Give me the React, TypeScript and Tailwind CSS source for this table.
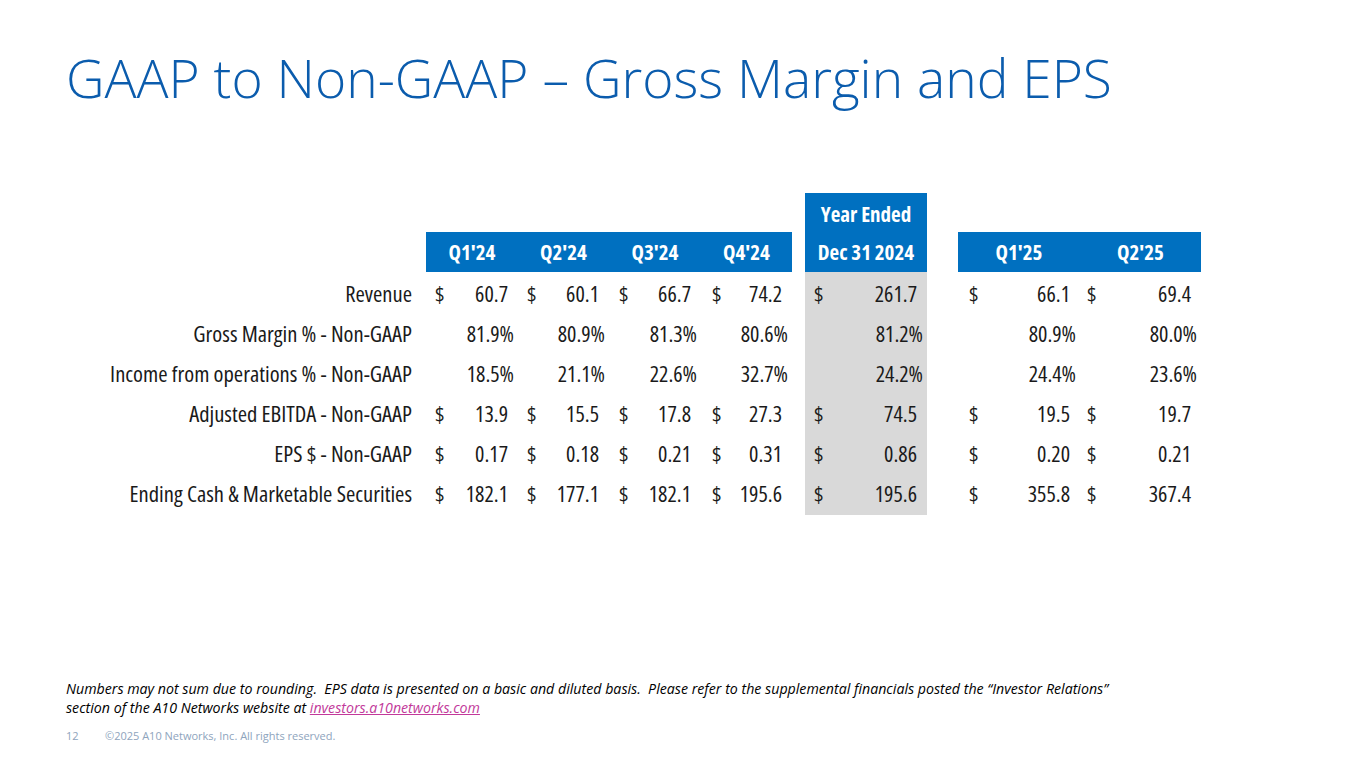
const tableFont = { fontFamily: '"Open Sans", sans-serif' }

type Row = { label: string; dollar: boolean; values: string[] }

const rows: Row[] = [
  { label: "Revenue", dollar: true, values: ["60.7", "60.1", "66.7", "74.2", "261.7", "66.1", "69.4"] },
  { label: "Gross Margin % - Non-GAAP", dollar: false, values: ["81.9%", "80.9%", "81.3%", "80.6%", "81.2%", "80.9%", "80.0%"] },
  { label: "Income from operations % - Non-GAAP", dollar: false, values: ["18.5%", "21.1%", "22.6%", "32.7%", "24.2%", "24.4%", "23.6%"] },
  { label: "Adjusted EBITDA - Non-GAAP", dollar: true, values: ["13.9", "15.5", "17.8", "27.3", "74.5", "19.5", "19.7"] },
  { label: "EPS $ - Non-GAAP", dollar: true, values: ["0.17", "0.18", "0.21", "0.31", "0.86", "0.20", "0.21"] },
  { label: "Ending Cash & Marketable Securities", dollar: true, values: ["182.1", "177.1", "182.1", "195.6", "195.6", "355.8", "367.4"] },
]

// left padding for the $ sign per value column
const padLeft = ["pl-[9px]", "pl-[9px]", "pl-[10px]", "pl-[11px]", "pl-[9px]", "pl-[11px]", "pl-[7px]"]

function ValueCell({ value, dollar, col, grey }: { value: string; dollar: boolean; col: number; grey?: boolean }) {
  const pct = value.endsWith("%")
  return (
    <div className={`flex h-[40px] items-center justify-between whitespace-nowrap pr-[4px] pt-[3px] ${padLeft[col]} ${grey ? "bg-[#d9d9d9]" : ""}`}>
      <span>{dollar ? "$" : ""}</span>
      <span className={pct ? "" : "mr-[6px]"}>{value}</span>
    </div>
  )
}

function HeaderCell({ children }: { children: React.ReactNode }) {
  return (
    <div className="flex h-[40px] items-center justify-center whitespace-nowrap bg-[#0070c0] text-[21px] font-bold text-white">
      {children}
    </div>
  )
}

export default function App() {
  return (
    <div className="relative flex h-[768px] w-[1365px] flex-col overflow-hidden bg-white">
      <h1
        className="pl-[66px] pt-[51px] text-[53.3px] font-light leading-none text-[#0b5cad]"
        style={{ fontFamily: '"Open Sans", sans-serif' }}
      >
        GAAP to Non-GAAP – Gross Margin and EPS
      </h1>

      <div
        className="ml-[100px] mt-[89px] grid grid-cols-[316px_10px_92px_91px_92px_91px_13px_122px_31px_122px_121px] text-[22px] text-[#1a1a1a] font-stretch-condensed"
        style={tableFont}
      >
        {/* header line 1 */}
        <div className="col-span-7 h-[39px]" />
        <div className="flex h-[39px] items-end justify-center bg-[#0070c0] pb-[2px] text-[21px] font-bold text-white">
          Year Ended
        </div>
        <div className="col-span-3" />

        {/* header line 2 */}
        <div className="col-span-2" />
        <HeaderCell>Q1'24</HeaderCell>
        <HeaderCell>Q2'24</HeaderCell>
        <HeaderCell>Q3'24</HeaderCell>
        <HeaderCell>Q4'24</HeaderCell>
        <div />
        <HeaderCell>Dec 31 2024</HeaderCell>
        <div />
        <HeaderCell>Q1'25</HeaderCell>
        <HeaderCell>Q2'25</HeaderCell>

        {rows.map((r) => (
          <div key={r.label} className="contents">
            <div className="flex h-[40px] items-center justify-end whitespace-nowrap pr-[4px] pt-[3px] text-[22.6px]">{r.label}</div>
            <div />
            {r.values.slice(0, 4).map((v, i) => (
              <ValueCell key={i} value={v} dollar={r.dollar} col={i} />
            ))}
            <div />
            <ValueCell value={r.values[4]} dollar={r.dollar} col={4} grey />
            <div />
            <ValueCell value={r.values[5]} dollar={r.dollar} col={5} />
            <ValueCell value={r.values[6]} dollar={r.dollar} col={6} />
          </div>
        ))}
        <div className="col-span-7 h-[3px]" />
        <div className="h-[3px] bg-[#d9d9d9]" />
        <div className="col-span-3" />
      </div>

      <div
        className="mt-auto pb-[25px] pl-[66px]"
        style={{ fontFamily: '"Open Sans", sans-serif' }}
      >
        <p className="text-[14.2px] italic leading-[19px] text-black">
          Numbers may not sum due to rounding.&nbsp; EPS data is presented on a basic and diluted basis.&nbsp; Please refer to the supplemental financials posted the “Investor Relations”
          <br />
          section of the A10 Networks website at{" "}
          <a href="#" className="text-[#c2399a] underline">
            investors.a10networks.com
          </a>
        </p>
        <div className="mt-[12px] flex text-[11px] leading-[14px] text-[#8ea4bd]">
          <span className="w-[39px]">12</span>
          <span>©2025 A10 Networks, Inc. All rights reserved.</span>
        </div>
      </div>
    </div>
  )
}
